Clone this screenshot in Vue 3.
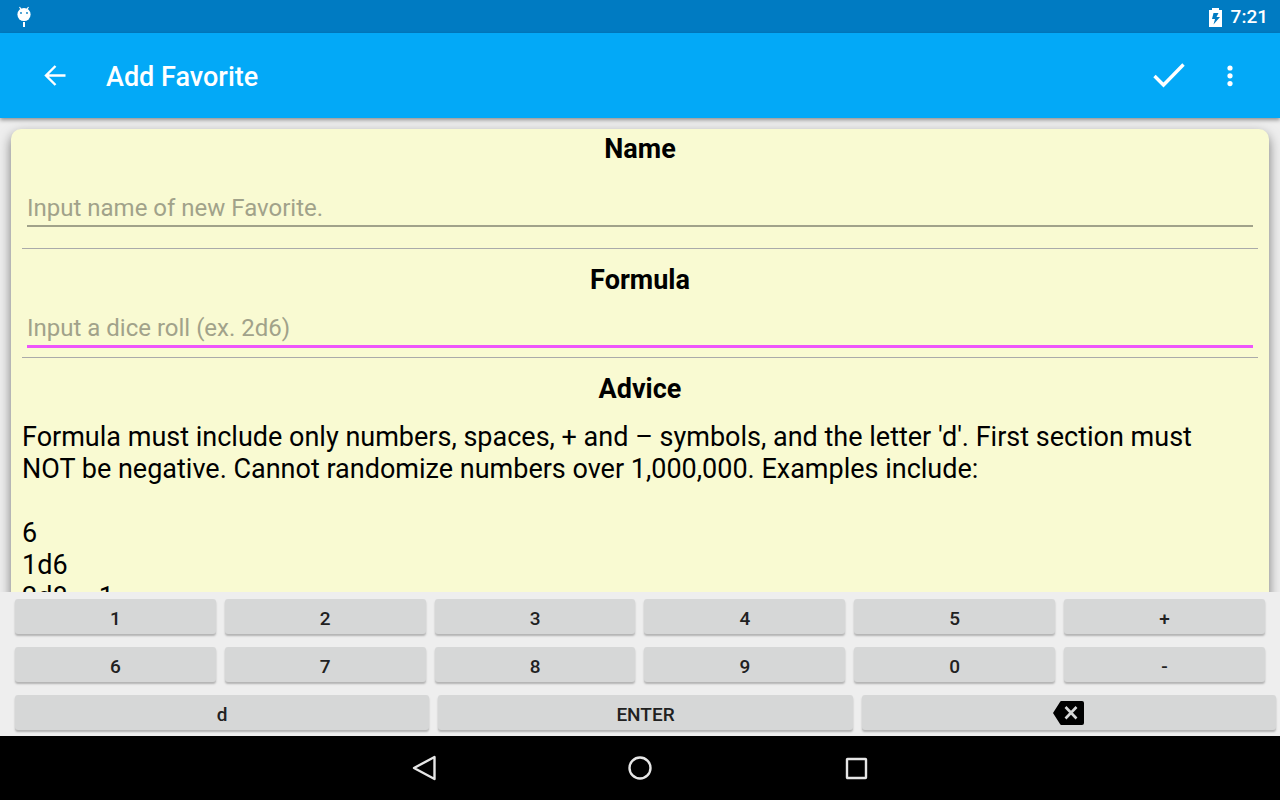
<script setup>
import { ref } from 'vue'

const name = ref('')
const formula = ref('')
const rows = [
  ['1', '2', '3', '4', '5', '+'],
  ['6', '7', '8', '9', '0', '-'],
]
const examples = ['6', '1d6', '2d8 – 1']

function press(key) {
  formula.value += key
}
function erase() {
  formula.value = formula.value.slice(0, -1)
}
</script>

<template>
  <div class="screen">
    <div class="status">
      <svg class="droid" viewBox="0 0 16 22" aria-hidden="true">
        <path d="M3.500 1l2 3M12.500 1l-2 3" stroke="#fff" stroke-width="1.200" />
        <circle cx="8" cy="8.500" r="6.600" fill="#fff" />
        <circle cx="5" cy="7" r="0.900" fill="#007bc2" />
        <circle cx="11" cy="7" r="0.900" fill="#007bc2" />
        <path d="M8 16v5" stroke="#fff" stroke-width="2" />
      </svg>
      <div class="status-right">
        <svg class="battery" viewBox="0 0 13 19" aria-hidden="true">
          <path d="M3 0h7v2h3v17H0V2h3z" fill="#fff" />
          <path d="M9.500 5H4.500L3 11h3l-1.500 5.500L11 9H7.500z" fill="#007bc2" />
        </svg>
        <span>7:21</span>
      </div>
    </div>

    <header class="appbar">
      <button class="icon-btn" type="button" aria-label="Back">
        <svg width="22" height="22" viewBox="0 0 22 22"><path d="M11.500 1L2 10.500l9.500 9.500M2 10.500H21.500" fill="none" stroke="#fff" stroke-width="2.400" /></svg>
      </button>
      <h1>Add Favorite</h1>
      <button class="icon-btn" type="button" aria-label="Save">
        <svg width="32" height="26" viewBox="0 0 32 26"><path d="M1.500 13L10.500 22L30.500 1.500" fill="none" stroke="#fff" stroke-width="3.400" /></svg>
      </button>
      <button class="icon-btn more" type="button" aria-label="More options">
        <svg width="6" height="22" viewBox="0 0 6 22"><g fill="#fff"><circle cx="3" cy="3" r="2.600" /><circle cx="3" cy="10.800" r="2.600" /><circle cx="3" cy="18.600" r="2.600" /></g></svg>
      </button>
    </header>

    <main class="content">
      <section class="card">
        <h2><label for="name">Name</label></h2>
        <input id="name" v-model="name" class="name" type="text" placeholder="Input name of new Favorite." />
        <hr />
        <h2 class="spaced"><label for="formula">Formula</label></h2>
        <input id="formula" v-model="formula" class="formula" type="text" placeholder="Input a dice roll (ex. 2d6)" />
        <hr />
        <h2 class="spaced">Advice</h2>
        <p>
          Formula must include only numbers, spaces, + and – symbols, and the letter 'd'. First section must NOT be
          negative. Cannot randomize numbers over 1,000,000. Examples include:
        </p>
        <ul>
          <li v-for="e in examples" :key="e">{{ e }}</li>
        </ul>
      </section>
    </main>

    <div class="keyboard">
      <div v-for="(row, i) in rows" :key="i" class="row">
        <button v-for="k in row" :key="k" type="button" class="key" @click="press(k)">{{ k }}</button>
      </div>
      <div class="row wide">
        <button type="button" class="key" @click="press('d')">d</button>
        <button type="button" class="key">ENTER</button>
        <button type="button" class="key erase" aria-label="Delete" @click="erase">
          <svg width="32" height="24" viewBox="0 0 32 24">
            <path d="M9 0H29a2 2 0 0 1 2 2V22a2 2 0 0 1-2 2H9a2 2 0 0 1-2-1L0 12L7 1a2 2 0 0 1 2-1z" fill="#000" />
            <path d="M12.500 6L23.500 17.500M23.500 6L12.500 17.500" stroke="#d6d7d7" stroke-width="2.600" />
          </svg>
        </button>
      </div>
    </div>

    <nav class="navbar">
      <button type="button" aria-label="Back">
        <svg width="28" height="28" viewBox="0 0 28 28"><path d="M4 14L24.500 3V25z" /></svg>
      </button>
      <button type="button" aria-label="Home">
        <svg width="28" height="28" viewBox="0 0 28 28"><circle cx="14" cy="14" r="10.500" /></svg>
      </button>
      <button type="button" aria-label="Recent apps">
        <svg width="28" height="28" viewBox="0 0 28 28"><rect x="5" y="5" width="19" height="19" rx="0.500" /></svg>
      </button>
    </nav>
  </div>
</template>

<style>
body {
  margin: 0;
}
</style>

<style scoped>
.screen {
  display: flex;
  flex-direction: column;
  height: 100vh;
  overflow: hidden;
  background: #eee;
  color: #000;
  font-family: Roboto, sans-serif;
}
button {
  border: 0;
  padding: 0;
  background: none;
  font-family: inherit;
}
svg {
  display: block;
}
.status {
  display: flex;
  align-items: center;
  justify-content: space-between;
  flex: none;
  height: 33px;
  padding: 0 12px 0 16px;
  background: #007bc2;
  color: #fff;
}
.droid {
  width: 16px;
  height: 22px;
}
.status-right {
  display: flex;
  align-items: center;
  gap: 9px;
  padding-top: 1px;
  font-size: 19px;
  font-weight: 500;
  line-height: 24px;
}
.battery {
  width: 13px;
  height: 19px;
}
.appbar {
  display: flex;
  align-items: center;
  flex: none;
  height: 85px;
  padding: 0 21px 0 23px;
  background: #03a9f7;
  color: #fff;
  box-shadow: 0 2px 4px rgba(0, 0, 0, 0.4);
  position: relative;
}
.icon-btn {
  display: flex;
  align-items: center;
  justify-content: center;
  width: 64px;
  height: 64px;
}
.icon-btn.more {
  width: 58px;
}
h1 {
  flex: 1;
  margin: 0 0 0 19px;
  padding-top: 2px;
  font-size: 27px;
  font-weight: 500;
  line-height: 32px;
}
.content {
  flex: 1;
  min-height: 0;
  overflow: hidden;
  padding: 11px 11px 0;
}
.card {
  display: flex;
  flex-direction: column;
  min-height: 600px;
  padding: 4px 11px;
  border-radius: 10px;
  background: #f9fad2;
  box-shadow: 0 5px 12px rgba(0, 0, 0, 0.5);
}
h2 {
  margin: 0;
  font-size: 27px;
  font-weight: 700;
  line-height: 32px;
  text-align: center;
}
h2.spaced {
  margin-top: 15px;
}
input {
  margin: 0 5px;
  padding: 0;
  border: 0;
  border-radius: 0;
  outline: none;
  background: transparent;
  color: #000;
  font-family: inherit;
  font-size: 24px;
  line-height: 32px;
}
input::placeholder {
  color: #a1a28a;
  opacity: 1;
}
.name {
  height: 35px;
  margin-top: 25px;
  margin-bottom: 21px;
  border-bottom: 2px solid #a1a28a;
}
.formula {
  height: 34px;
  margin-top: 15px;
  margin-bottom: 9px;
  border-bottom: 3px solid #ee55fb;
}
hr {
  width: 100%;
  margin: 0;
  border: 0;
  border-top: 1px solid #aaa;
}
p {
  margin: 16px 0 32px;
  padding-right: 16px;
  font-size: 27px;
  line-height: 32px;
}
ul {
  margin: 0;
  padding: 0;
  list-style: none;
  font-size: 27px;
  line-height: 32px;
}
.keyboard {
  position: relative;
  flex: none;
  background: #eee;
}
.row {
  display: grid;
  grid-template-columns: repeat(6, 1fr);
  gap: 9px;
  padding: 7px 15px 6px;
}
.row.wide {
  grid-template-columns: repeat(3, 1fr);
  padding-right: 4px;
}
.key {
  display: flex;
  align-items: center;
  justify-content: center;
  height: 35px;
  padding-top: 5px;
  border-radius: 3px;
  background: #d6d7d7;
  box-shadow: 0 2px 2px rgba(0, 0, 0, 0.25);
  color: #212121;
  font-size: 19px;
  font-weight: 500;
  line-height: 24px;
}
.key.erase {
  padding: 0;
}
.navbar {
  display: flex;
  align-items: center;
  justify-content: center;
  gap: 88px;
  flex: none;
  height: 64px;
  background: #000;
}
.navbar button {
  display: flex;
  align-items: center;
  justify-content: center;
  width: 128px;
  height: 64px;
}
.navbar svg {
  fill: none;
  stroke: #e6e6e6;
  stroke-width: 2.4px;
  stroke-linejoin: round;
}
</style>
